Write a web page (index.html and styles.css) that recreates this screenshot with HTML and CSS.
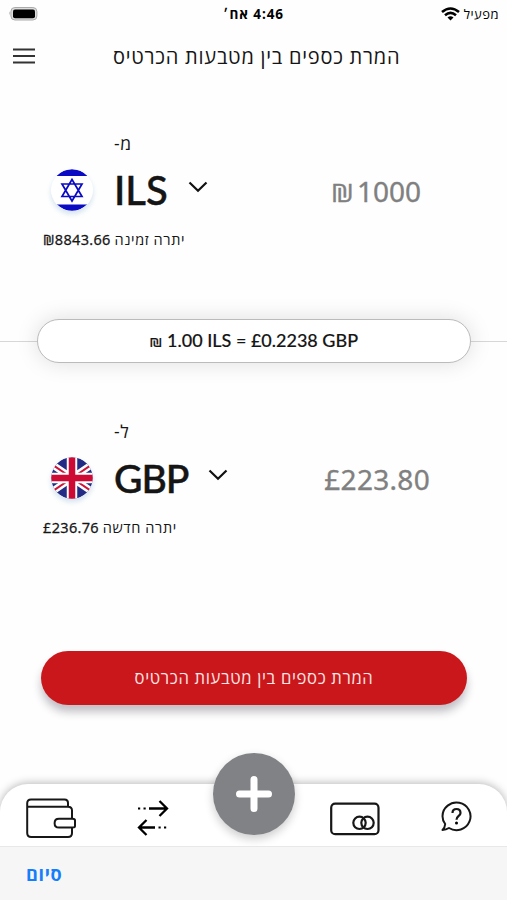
FILE: index.html
```html
<!DOCTYPE html>
<html lang="he">
<head>
<meta charset="utf-8">
<title>המרת כספים</title>
<link rel="stylesheet" href="styles.css">
</head>
<body>
<div class="status">
  <svg class="battery" width="30" height="14" viewBox="0 0 30 14"><path d="M1.6 4.2Q0 6.200 1.600 8.200Z" fill="#aaa"/><rect x="2.900" y=".5" width="26" height="12.500" rx="4" fill="#ddd" stroke="#aaa"/><rect x="5" y="2.500" width="22" height="8.700" rx="2" fill="#000"/></svg>
  <span class="clock" dir="rtl">4:46 אח׳</span>
  <div class="carrier">
    <svg width="19" height="14" viewBox="0 0 19 14"><g fill="none" stroke="#000" stroke-width="2.600"><path d="M1 5Q9.500-2 18 5"/><path d="M4 8.200Q9.500 3.600 15 8.200"/></g><path d="M6.500 10.500Q9.500 8 12.500 10.500L9.500 13.500Z"/></svg>
    <span class="operator" dir="rtl">מפעיל</span>
  </div>
</div>
<header class="header">
  <svg class="menu" width="22" height="16" viewBox="0 0 22 16"><path d="M0 1.500H22M0 8H22M0 14.500H22" stroke="#333" stroke-width="1.900"/></svg>
  <h1 class="title" dir="rtl">המרת כספים בין מטבעות הכרטיס</h1>
</header>
<section class="account from">
  <div class="direction" dir="rtl">מ-</div>
  <div class="row">
    <svg class="flag" width="42" height="42" viewBox="0 0 42 42"><defs><clipPath id="c1"><circle cx="21" cy="21" r="20.800"/></clipPath></defs><g clip-path="url(#c1)"><path fill="#fff" d="M0 0H42V42H0Z"/><path fill="#0b0bc4" d="M0 0H42V7H0ZM0 35.500H42V42H0Z"/></g><path d="M21 10.500L31 27.500H11ZM21 32L11 15H31Z" fill="none" stroke="#0b0bc4" stroke-width="1.700"/></svg>
    <span class="code ils">ILS</span>
    <svg class="chevron" width="20" height="12" viewBox="0 0 20 12"><path d="M1.500 1.500L10 9.800L18.500 1.500" fill="none" stroke="#111" stroke-width="2.200"/></svg>
    <span class="amount send"><span class="shekel">₪</span>1000</span>
  </div>
  <div class="balance" dir="rtl"><span class="label">יתרה זמינה</span> <span class="num">₪8843.66</span></div>
</section>
<div class="rate-line"><div class="rate"><span class="rate-text"><span class="rate-shekel">₪</span> 1.00 ILS = £0.2238 GBP</span></div></div>
<section class="account to">
  <div class="direction" dir="rtl">ל-</div>
  <div class="row">
    <svg class="flag" width="42" height="42" viewBox="0 0 42 42"><defs><clipPath id="c2"><circle cx="21" cy="21" r="20.800"/></clipPath></defs><g clip-path="url(#c2)"><path fill="#232b85" d="M0 0H42V42H0Z"/><path d="M-10 0L52 42M52 0L-10 42" stroke="#fff" stroke-width="7"/><path d="M-10 0L21 21M21 21L52 0M21 21L52 42M21 21L-10 42" stroke="#ce1238" stroke-width="2"/><path d="M21 0V42M0 21H42" stroke="#fff" stroke-width="10.500"/><path d="M21 0V42M0 21H42" stroke="#ce0b35" stroke-width="6.500"/></g></svg>
    <span class="code gbp">GBP</span>
    <svg class="chevron" width="20" height="12" viewBox="0 0 20 12"><path d="M1.500 1.500L10 9.800L18.500 1.500" fill="none" stroke="#111" stroke-width="2.200"/></svg>
    <span class="amount receive">£223.80</span>
  </div>
  <div class="balance" dir="rtl"><span class="label">יתרה חדשה</span> <span class="num">£236.76</span></div>
</section>
<button class="submit" dir="rtl"><span>המרת כספים בין מטבעות הכרטיס</span></button>
<nav class="tabs">
  <svg class="wallet" width="50" height="41" viewBox="0 0 50 41"><g fill="none" stroke="#171717" stroke-width="2"><path d="M42 8.700V5Q42 1.500 38.500 1.500H5Q1.200 1.500 1.200 5.300V35Q1.200 39 5.200 39H42Q46 39 46 35V29.500M1.200 8.700H42Q46 8.700 46 12.500V20.800"/><path d="M33 20.800H46.500Q49 20.800 49 22.500V28Q49 29.500 46.500 29.500H33Q28.600 29.500 28.600 25.150Q28.600 20.800 33 20.800Z"/></g></svg>
  <svg class="swap" width="32" height="36" viewBox="0 0 32 36"><g fill="none" stroke="#000" stroke-width="2.300"><path d="M12 8.500H29M22.500 1L30 8.500L22.500 16M18 27.500H2M9.500 20L2 27.500L9.500 35"/></g><path d="M1 7.400h2.200v2.200H1zM6.500 7.400h2.200v2.200H6.500zM21.500 26.400h2.200v2.200h-2.200zM27 26.400h2.200v2.200H27z"/></svg>
  <div class="add"><svg width="36" height="36" viewBox="0 0 36 36"><path d="M18 3.500V32.500M3.500 18H32.500" stroke="#fff" stroke-width="7" stroke-linecap="round"/></svg></div>
  <svg class="card" width="50" height="34" viewBox="0 0 50 34"><g fill="none" stroke="#171717" stroke-width="2.200"><rect x="1.200" y="1.700" width="47.300" height="30.500" rx="4"/><circle cx="29.500" cy="20.800" r="6.200"/><circle cx="37.500" cy="20.800" r="6.200"/></g></svg>
  <svg class="help" width="31" height="31" viewBox="0 0 31 31"><path d="M4.200 23Q1.500 19.500 1.500 15.200A14 13.800 0 1 1 8 27Q5 28.900 1.500 28.900Q4 26.500 4.200 23Z" fill="none" stroke="#171717" stroke-width="2" stroke-linejoin="round"/><path d="M11.500 12Q11.500 8 15.500 8T19.500 12C19.500 15 15.500 15 15.500 18.800" fill="none" stroke="#171717" stroke-width="2.200"/><circle cx="15.500" cy="22" r="1.500"/></svg>
</nav>
<footer class="done" dir="rtl"><span>סיום</span></footer>
</body>
</html>
```
FILE: styles.css
```css
* { box-sizing: border-box; }
body { margin: 0; width: 507px; height: 900px; overflow: hidden; background: #fefefe; color: #151515; font-family: "Open Sans", "Liberation Sans", sans-serif; direction: ltr; display: flex; flex-direction: column; }
svg { display: block; flex: none; }
span { white-space: nowrap; }
.status { height: 28px; flex: none; display: grid; grid-template-columns: 1fr 1fr 1fr; padding: 0 8px 0 8px; align-items: center; color: #000; }
.clock { justify-self: center; font-weight: 700; font-size: 13.5px; line-height: 20px; letter-spacing: .9px; }
.battery { margin-top: -1px; }
.carrier { display: flex; justify-content: flex-end; align-items: center; gap: 4px; margin-top: -1px; }
.operator { font-size: 13px; line-height: 20px; letter-spacing: .5px; }
.header { height: 57px; flex: none; display: flex; align-items: center; padding: 0 13px; }
.menu { margin-top: -1px; }
.title { margin: 1px 0 0 78px; font-weight: 400; font-size: 20px; line-height: 28px; letter-spacing: .76px; white-space: nowrap; }
.account { flex: none; height: 234px; display: flex; flex-direction: column; }
.from { padding-top: 47px; }
.to { height: 230px; padding-top: 43px; margin-top: 14px; }
.direction { margin-left: 114px; align-self: flex-start; height: 22px; font-size: 17.5px; line-height: 22px; letter-spacing: .7px; }
.row { height: 68px; margin-top: 2px; display: flex; align-items: center; padding-left: 51px; }
.flag { border-radius: 50%; box-shadow: 0 3px 5px rgba(60, 130, 180, .22); }
.code { margin: 0 0 0 21px; font-family: Lato, sans-serif; font-weight: 500; font-size: 40px; line-height: 48px; -webkit-text-stroke: .5px #111; }
.gbp { font-size: 39px; letter-spacing: -1px; }
.chevron { margin: -7px 0 0 20px; }
.amount { margin-left: auto; margin-top: 2px; color: #808080; font-family: "Noto Sans", sans-serif; font-size: 28px; line-height: 38px; -webkit-text-stroke: .35px #808080; }
.send { margin-right: 86px; }
.receive { margin-right: 77px; letter-spacing: .3px; }
.shekel { display: inline-block; margin-right: 3px; font-family: "Open Sans", sans-serif; font-size: 25px; transform: scaleX(1.15); transform-origin: right; }
.balance { margin: 6px 0 0 43px; align-self: flex-start; font-size: 14.5px; line-height: 20px; white-space: nowrap; }
.label { letter-spacing: .6px; }
.num { font-weight: 500; letter-spacing: .35px; -webkit-text-stroke: .3px #151515; }
.rate-line { height: 44px; flex: none; display: flex; justify-content: center; background: linear-gradient(#d7d7d7, #d7d7d7) 0 22px / 100% 1px no-repeat; }
.rate { width: 434px; height: 44px; border: 1px solid #bbb; border-radius: 22px; background: #fff; box-shadow: 0 0 22px rgba(0, 0, 0, .13); display: flex; align-items: center; justify-content: center; }
.rate-text { margin-top: -2px; font-family: Lato, "Open Sans", sans-serif; font-weight: 500; font-size: 18px; line-height: 24px; -webkit-text-stroke: .15px #151515; }
.rate-shekel { font-size: 16px; }
.submit { margin: 44px 0 0 41px; width: 426px; height: 54px; flex: none; padding: 0; border: 0; border-radius: 27px; background: #ca171c; box-shadow: 0 7px 9px rgba(40, 30, 50, .28); color: #fde6e4; font: 400 16.600px/24px "Open Sans", sans-serif; letter-spacing: .65px; }
.tabs { margin-top: 79px; height: 62px; flex: none; border-radius: 28px 28px 0 0; background: #fff; box-shadow: 0 -1px 9px rgba(0, 0, 0, .28); display: flex; align-items: flex-start; padding-left: 26px; }
.wallet { margin-top: 14px; }
.swap { margin: 16px 0 0 61px; }
.add { margin: -31px 0 0 44px; width: 82px; height: 82px; flex: none; border-radius: 50%; background: #808285; box-shadow: 0 4px 10px rgba(0, 0, 0, .2); display: flex; align-items: center; justify-content: center; }
.card { margin: 18px 0 0 35px; }
.help { margin: 17px 0 0 61px; }
.done { flex: 1; border-top: 1px solid #e8e8e8; background: #f6f6f6; color: #147efb; font-weight: 700; font-size: 18px; line-height: 24px; letter-spacing: .7px; padding: 15px 0 0 26px; text-align: left; }
```
